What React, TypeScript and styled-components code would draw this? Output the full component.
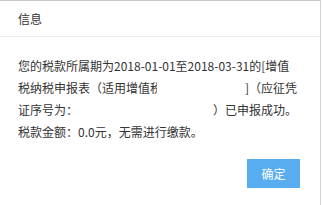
import React from "react";
import styled, { createGlobalStyle } from "styled-components";

const Global = createGlobalStyle`
  html, body { margin: 0; padding: 0; background: #fff; }
  body { font-family: "Noto Sans CJK SC", "Noto Sans", sans-serif; }
`;

const Dialog = styled.div`
  width: 320px;
  height: 204px;
  background: #fff;
  border-top: 1px solid #c9c9c9;
  border-right: 1px solid #d4d4d4;
  display: flex;
  flex-direction: column;
`;

const Header = styled.div`
  height: 35px;
  border-bottom: 1px solid #eeeeee;
  display: flex;
  align-items: center;
  padding-left: 18px;
  font-size: 12px;
  color: #333;
`;

const Body = styled.div`
  padding: 18px 23px 0 18px;
  font-size: 12px;
  line-height: 22px;
  color: #333;
`;

const Line = styled.div<{ $split?: boolean }>`
  display: flex;
  justify-content: ${(p) => (p.$split ? "space-between" : "flex-start")};
  white-space: nowrap;
  height: 22px;
`;

const Clip = styled.span<{ $w: number }>`
  display: inline-block;
  width: ${(p) => p.$w}px;
  overflow: hidden;
  vertical-align: top;
`;

const Footer = styled.div`
  display: flex;
  justify-content: flex-end;
  padding: 16px 20px 0 0;
`;

const OkButton = styled.button`
  width: 53px;
  height: 29px;
  border: none;
  background: #58adf0;
  color: #fff;
  font-family: "Noto Sans CJK SC", sans-serif;
  font-size: 12px;
  padding: 0;
  cursor: pointer;
`;

export default function App() {
  return (
    <>
      <Global />
      <Dialog>
        <Header>信息</Header>
        <Body>
          <Line>您的税款所属期为2018-01-01至2018-03-31的[增值</Line>
          <Line $split>
            <span>
              税纳税申报表（适用增值<Clip $w={7}>税</Clip>
            </span>
            <span>]（应征凭</span>
          </Line>
          <Line $split>
            <span>证序号为：</span>
            <span>）已申报成功。</span>
          </Line>
          <Line>税款金额：0.0元，无需进行缴款。</Line>
        </Body>
        <Footer>
          <OkButton>确定</OkButton>
        </Footer>
      </Dialog>
    </>
  );
}
